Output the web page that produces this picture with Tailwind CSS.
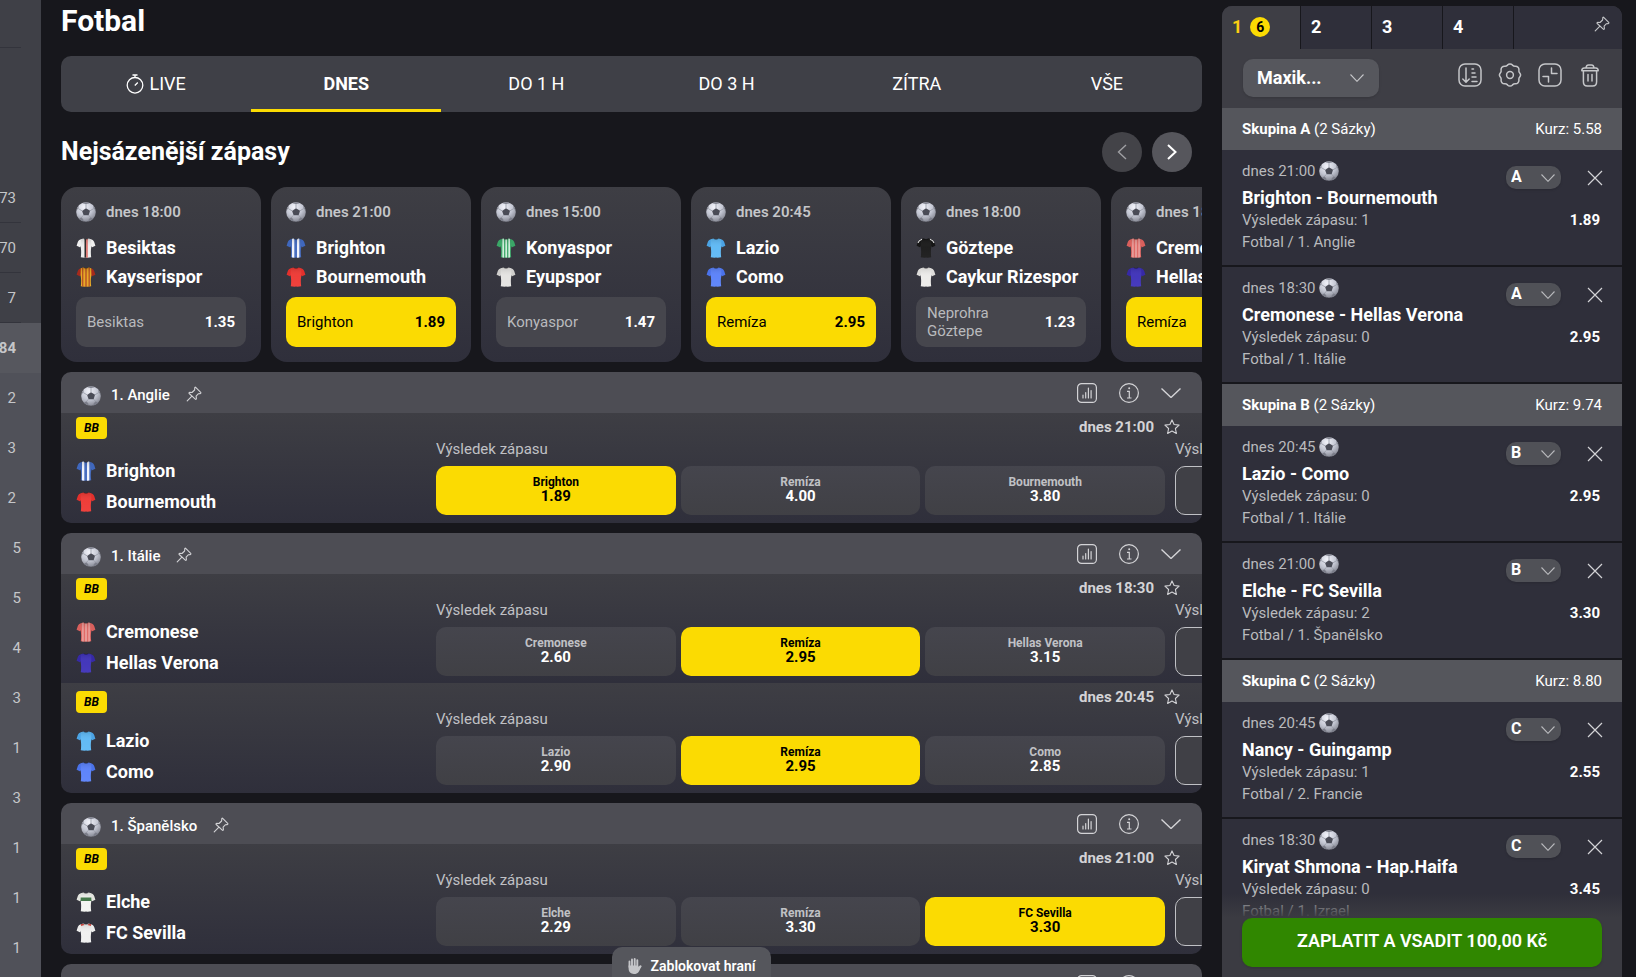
<!DOCTYPE html>
<html lang="cs">
<head>
<meta charset="utf-8">
<meta name="viewport" content="width=device-width, initial-scale=1">
<title>Fotbal</title>
<script src="https://cdn.jsdelivr.net/npm/@tailwindcss/browser@4"></script>
</head>
<body class="bg-[#17171c] text-white font-[Roboto,sans-serif] h-screen overflow-hidden text-[15px]">

<svg class="absolute size-0" aria-hidden="true">
  <defs>
    <radialGradient id="ballShade" cx="0.4" cy="0.25" r="0.8">
      <stop offset="0" stop-color="#f2f3fa"/><stop offset="0.55" stop-color="#c3c6d2"/><stop offset="1" stop-color="#80828d"/>
    </radialGradient>
    <linearGradient id="fold" x1="0" y1="0" x2="0" y2="1">
      <stop offset="0" stop-color="#000" stop-opacity="0.14"/><stop offset="0.45" stop-color="#fff" stop-opacity="0.04"/><stop offset="1" stop-color="#fff" stop-opacity="0.06"/>
    </linearGradient>
    <clipPath id="torso"><path d="M4.8 1.300 7.500.4c1.400 1 3.600 1 5 0l2.700.9.200 7.300c-.8 3.600-.6 7.500-.2 10.600l-3.700.6-1.500-.4-1.500.4-3.700-.6c.4-3.100.6-7-.2-10.600z"/></clipPath>
  </defs>
  <symbol id="ball" viewBox="0 0 20 20">
    <circle cx="10" cy="10" r="9.800" fill="url(#ballShade)"/>
    <path d="M10 6.200 14 8.800 12.600 13.200H7.600L6.100 8.900z" fill="#4a4c57"/>
    <path d="M6.300 1.200 10 2.100 13.800 1.200 12.500.6 10 .3 7.500.6zM.5 8.500 2.200 6.500 3 3.600 1.300 6zM19.500 8.500 17.800 6.500 17 3.600 18.700 6zM3 16.700 5.400 15.300 7.300 17.600 7.600 19.400 5 18.400zM17 16.700 14.600 15.300 12.700 17.600 12.400 19.400 15 18.400z" fill="#7c7e8a"/>
    <path d="M10 2.100v4.100M14 8.800l3.800-2.300M12.600 13.200l2 2.100M7.600 13.200l-2.200 2.100M6.100 8.900 2.200 6.500" stroke="#9699a5" stroke-width=".8" fill="none"/>
  </symbol>
  <symbol id="pin" viewBox="0 0 16 16">
    <path d="m9.700 1.300 5 5c.5.500.2 1.300-.5 1.300l-1.700.1-2.400 2.400.3 2.300c.1.800-.6 1.200-1.100.7L3.200 7.500c-.5-.5-.1-1.200.6-1.200l2.200.2 2.600-2.500.2-2.100c0-.7.5-1 .9-.6zM5.700 10.300 1.200 14.800" fill="none" stroke="currentColor" stroke-width="1.100" stroke-linecap="round" stroke-linejoin="round"/>
  </symbol>
  <symbol id="chart" viewBox="0 0 20 20">
    <rect x=".6" y=".6" width="18.800" height="18.800" rx="4" fill="none" stroke="currentColor" stroke-width="1.200"/>
    <path d="M6 15v-3M8.700 15V9.500M11.400 15V5M14.100 15V7.500" stroke="currentColor" stroke-width="1.200" stroke-linecap="round"/>
  </symbol>
  <symbol id="info" viewBox="0 0 20 20">
    <circle cx="10" cy="10" r="9.400" fill="none" stroke="currentColor" stroke-width="1.200"/>
    <path d="M8 8.300h2.300V15M8 15h4.500" fill="none" stroke="currentColor" stroke-width="1.200"/><circle cx="10.200" cy="5.300" r="1" fill="currentColor"/>
  </symbol>
  <symbol id="chevron" viewBox="0 0 20 10"><path d="M.5.5 10 9.500 19.500.5" fill="none" stroke="currentColor" stroke-width="1.400"/></symbol>
  <symbol id="chevronSmall" viewBox="0 0 14 8"><path d="M.5.5 7 7.300 13.500.5" fill="none" stroke="currentColor" stroke-width="1.100"/></symbol>
  <symbol id="star" viewBox="0 0 16 16"><path d="M8 .9 10.100 5.500l5 .6-3.700 3.400 1 5L8 12l-4.400 2.500 1-5L.9 6.100l5-.6z" fill="none" stroke="currentColor" stroke-width="1.100" stroke-linejoin="round"/></symbol>
  <symbol id="cross" viewBox="0 0 16 16"><path d="M1 1l14 14M15 1 1 15" stroke="currentColor" stroke-width="1.200"/></symbol>
</svg>

<div class="flex h-full">
  <nav aria-label="Sporty" class="w-[41px] shrink-0 bg-[#3f4047] text-[#c5c6c9] overflow-hidden">
    <div class="h-12 mr-5 border-b border-[#33343c]"></div>
    <div class="h-[125px]"></div>
    <div id="counts"></div>
  </nav>

  <main class="relative flex-1 min-w-0 mx-5 overflow-hidden">
    <h1 class="text-3xl leading-[42px] h-14 font-bold">Fotbal</h1>
    <div id="tabs" class="grid grid-cols-6 h-14 rounded-[10px] bg-[#3f4047] overflow-hidden text-lg"></div>

    <div class="flex items-center h-[75px] pt-1">
      <h2 class="text-[25px] font-bold flex-1">Nejsázenější zápasy</h2>
      <div class="flex gap-[10px] mr-[10px]">
        <button aria-label="Předchozí" class="size-10 rounded-full bg-[#434348] text-[#a0a0a4] grid place-items-center"><svg class="w-[10px] h-4" viewBox="0 0 10 16"><path d="M9 1 1.500 8 9 15" fill="none" stroke="currentColor" stroke-width="1.400"/></svg></button>
        <button aria-label="Další" class="size-10 rounded-full bg-[#56565c] grid place-items-center"><svg class="w-[10px] h-4" viewBox="0 0 10 16"><path d="M1 1 8.500 8 1 15" fill="none" stroke="currentColor" stroke-width="2"/></svg></button>
      </div>
    </div>

    <div id="cards" class="flex gap-[10px] overflow-hidden"></div>
    <div id="leagues"></div>
  </main>

  <aside class="relative w-[400px] shrink-0 mr-[14px] mt-[6px] rounded-t-[10px] overflow-hidden bg-[#3e3e45]">
    <div class="flex h-[43px] bg-[#2f2f3a] text-lg font-bold">
      <button class="w-[78px] flex items-center gap-2 pl-[10px] pb-[2px] bg-[#3e3e45] text-[#fbce12]">1 <span class="size-5 rounded-full bg-[#fbdb02] text-black text-sm leading-5 text-center">6</span></button>
      <button class="w-[71px] pl-[10px] pb-[2px] text-left border-l border-[#17171c]">2</button>
      <button class="w-[71px] pl-[10px] pb-[2px] text-left border-l border-[#17171c]">3</button>
      <button class="w-[71px] pl-[10px] pb-[2px] text-left border-l border-[#17171c]">4</button>
      <div class="flex-1 flex justify-end pr-3 pt-[10px] border-l border-[#17171c]">
        <button aria-label="Připnout" class="size-4 text-[#c5c6c9]"><svg class="size-4"><use href="#pin"/></svg></button>
      </div>
    </div>

    <div class="flex items-start justify-between h-[59px] pt-[10px] pl-[21px] pr-5">
      <label class="relative block">
        <select aria-label="Typ tiketu" class="appearance-none w-[136px] h-[38px] pl-[14px] rounded-[10px] bg-[#56575d] text-lg font-bold shadow-sm"><option>Maxik...</option></select>
        <svg class="absolute right-[15px] top-[15px] w-[14px] h-2 text-[#c5c6c9] pointer-events-none"><use href="#chevronSmall"/></svg>
      </label>
      <div class="flex gap-4 pt-1 text-[#c5c6c9]">
        <button aria-label="Seřadit"><svg class="size-6" viewBox="0 0 24 24" fill="none" stroke="currentColor" stroke-width="1.500" stroke-linecap="round" stroke-linejoin="round"><rect x="1" y="1" width="22" height="22" rx="6"/><path d="M8 5v14M4.800 16 8 19.200 11.200 16M14 6h1.500M14 10h3M14 14h4M14 18.500h5"/></svg></button>
        <button aria-label="Nastavení"><svg class="size-6" viewBox="0 0 24 24" fill="none" stroke="currentColor" stroke-width="1.500" stroke-linejoin="round"><path d="M9.500 2.100c1.400-1.500 3.600-1.500 5 0 .8.800 1.700 1.200 2.800 1.100 2.200-.1 3.900 1.800 3.600 4-.2 1.100.1 2 .8 2.800 1.300 1.500 1.300 2.500 0 4-.7.800-1 1.700-.8 2.800.3 2.200-1.400 4.100-3.600 4-1.100-.1-2 .3-2.800 1.100-1.400 1.500-3.600 1.500-5 0-.8-.8-1.700-1.200-2.800-1.100-2.200.1-3.900-1.800-3.600-4 .2-1.100-.1-2-.8-2.800-1.300-1.500-1.300-2.500 0-4 .7-.8 1-1.700.8-2.800-.3-2.200 1.400-4.100 3.600-4 1.100.1 2-.3 2.800-1.100z"/><circle cx="12" cy="12" r="3.400"/></svg></button>
        <button aria-label="Zmenšit"><svg class="size-6" viewBox="0 0 24 24" fill="none" stroke="currentColor" stroke-width="1.500" stroke-linecap="round" stroke-linejoin="round"><rect x="1" y="1" width="22" height="22" rx="6"/><path d="M13.500 5v5.500H19M5 13.500h5.500V19"/></svg></button>
        <button aria-label="Smazat"><svg class="size-6" viewBox="0 0 24 24" fill="none" stroke="currentColor" stroke-width="1.500" stroke-linecap="round" stroke-linejoin="round"><path d="M3.800 7.700c0-2 1-2.800 2.400-2.800h11.600c1.400 0 2.400.8 2.400 2.800zM8 4.700C8.300 2.700 9 2 10.500 2h3c1.500 0 2.200.7 2.500 2.700M5.400 7.900v10.800c0 2.900 1.300 4.300 3.900 4.300h5.400c2.600 0 3.900-1.400 3.900-4.300V7.900M10 11.500v6.500M14 11.500v6.500"/></svg></button>
      </div>
    </div>

    <div id="slip"></div>

    <div class="absolute inset-x-0 bottom-0">
      <div class="h-6 bg-linear-to-b from-[#3b3b42]/0 to-[#3b3b42]"></div>
      <div class="bg-[#3b3b42] px-5 pb-[10px]">
        <button class="w-full h-[49px] pb-[3px] rounded-[10px] bg-[#308700] text-lg font-semibold shadow">ZAPLATIT A VSADIT 100,00 Kč</button>
      </div>
    </div>
  </aside>
</div>

<button class="fixed bottom-0 left-[612px] w-[159px] h-[30px] pt-2 rounded-t-[10px] bg-[#55565c] flex justify-center items-center gap-[9px] text-sm font-semibold">
  <svg class="w-[14px] h-4 text-[#c5c6c9]" viewBox="0 0 14 16" fill="none" stroke="currentColor" stroke-width="1.900" stroke-linecap="round"><path d="M1.500 9V3.500M4 8V1.500M6.700 8V1M9.300 9V2.200M9.500 11.500l3-3.300"/><path d="M.6 7.500H10l.8 2L13 7.800c.6.500.4 1.200 0 1.800-1.300 2-2 6-5.500 6.400C3.500 16.300.6 14.500.6 10.500z" fill="currentColor" stroke="none"/></svg>
  Zablokovat hraní
</button>

<script>
const ball = '<svg class="size-5 shrink-0"><use href="#ball"/></svg>';

// Jersey: body colour, sleeve colour, and stripes as [x, width, colour] or bands as markup
function jersey(body, sleeve, stripes = [], extra = '') {
  return `<svg class="size-5 shrink-0" viewBox="0 0 20 20">
    <path d="M6 .9C3.800 1.500 2.300 2.200 1.800 4L.6 7.800l3.300 1.500 1.700-2zM14 .9c2.200.6 3.700 1.300 4.200 3.100l1.200 3.800-3.300 1.500-1.700-2z" fill="${sleeve}"/>
    <g clip-path="url(#torso)"><rect width="20" height="20" fill="${body}"/>${stripes.map(([x, w, c]) => `<rect x="${x}" width="${w}" height="20" fill="${c}"/>`).join('')}${extra}<rect width="20" height="20" fill="url(#fold)"/></g>
    <path d="M7.600.5c1.400 1.300 3.400 1.300 4.800 0" fill="none" stroke="#0005" stroke-width=".8"/></svg>`;
}
const kit = {
  'Besiktas': jersey('#ececec', '#f0f0f0', [[8.5, 1.5, '#222'], [10.3, 1.3, '#d9443c']]),
  'Kayserispor': jersey('#e8a51c', '#a52a1c', [[6.2, 1.1, '#a8391c'], [9.4, 1.2, '#a8391c'], [12.6, 1.1, '#a8391c']]),
  'Brighton': jersey('#3f67bd', '#3f67bd', [[6, 2.3, '#f1f3fb'], [11, 2.3, '#f1f3fb']]),
  'Bournemouth': jersey('#ee3631', '#e2302c'),
  'Konyaspor': jersey('#3aa767', '#3aa767', [[6.5, 1.3, '#f4fff8'], [9.5, 1.3, '#f4fff8'], [12.5, 1.3, '#f4fff8']]),
  'Eyupspor': jersey('#e4e3e1', '#cfcecc'),
  'Lazio': jersey('#5cb8f5', '#4ba3e4'),
  'Como': jersey('#5880fa', '#4a72ea'),
  'Göztepe': jersey('#161616', '#161616').replace('</svg>', '<path d="M6 1.200C3.800 2 2.600 2.800 2 4.800M14 1.200c2.200.8 3.400 1.600 4 3.600" fill="none" stroke="#e8e8e8" stroke-width="1.100"/></svg>'),
  'Caykur Rizespor': jersey('#ecebe9', '#dddcda'),
  'Cremonese': jersey('#df6460', '#d95f5c', [[6.5, .9, '#f0c4c2'], [9.5, 1, '#f0c4c2'], [12.6, .9, '#f0c4c2']]),
  'Hellas Verona': jersey('#3c2fb8', '#3629a6'),
  'Elche': jersey('#f3f4f0', '#e2e4de', [], '<rect y="5.500" width="20" height="3.500" fill="#3d7443"/>'),
  'FC Sevilla': jersey('#efefef', '#ececec', [], '<path d="M4 .5h3l1.500 1.500L5 3zM16 .5h-3L11.500 2 15 3z" fill="#d9443c"/>'),
};

document.getElementById('counts').innerHTML =
  [73, 70, 7].map(n => `<a href="#" class="flex flex-col items-end h-[50px] pr-[25px] text-right leading-[50px] relative after:absolute after:bottom-0 after:left-0 after:right-5 after:h-px after:bg-[#33343c] last:after:hidden">${n}</a>`).join('') +
  `<div class="bg-[#505159]">` +
  `<a href="#" class="flex justify-end h-[50px] pr-[25px] leading-[50px] font-bold bg-[#56575e]">84</a>` +
  [2, 3, 2].map(n => `<a href="#" class="flex justify-end h-[50px] pr-[25px] leading-[50px]">${n}</a>`).join('') +
  [5, 5, 4, 3, 1, 3, 1, 1, 1, ''].map(n => `<a href="#" class="flex justify-end h-[50px] pr-5 leading-[50px]">${n}</a>`).join('') + `</div>`;

const stopwatch = '<svg class="w-[18px] h-5 mr-[5px]" viewBox="0 0 17 20" fill="none" stroke="currentColor" stroke-width="1.300"><circle cx="8.500" cy="11.300" r="7.800"/><path d="M6 1h5M8.500 1v2.500M8.300 11.500l3-3"/></svg>';
document.getElementById('tabs').innerHTML = ['LIVE', 'DNES', 'DO 1 H', 'DO 3 H', 'ZÍTRA', 'VŠE'].map((t, i) =>
  `<button class="flex items-center justify-center border-y-[3px] border-t-transparent ${i === 1 ? 'font-bold border-b-[#fbdb02]' : 'border-b-transparent'}">${i ? '' : stopwatch}${t}</button>`).join('');

const cards = [
  ['18:00', 'Besiktas', 'Kayserispor', 'Besiktas', '1.35', 0],
  ['21:00', 'Brighton', 'Bournemouth', 'Brighton', '1.89', 1],
  ['15:00', 'Konyaspor', 'Eyupspor', 'Konyaspor', '1.47', 0],
  ['20:45', 'Lazio', 'Como', 'Remíza', '2.95', 1],
  ['18:00', 'Göztepe', 'Caykur Rizespor', 'Neprohra Göztepe', '1.23', 0],
  ['18:30', 'Cremonese', 'Hellas Verona', 'Remíza', '2.95', 1],
];
document.getElementById('cards').innerHTML = cards.map(([time, home, away, tip, odd, on]) => `
  <article class="w-[200px] h-[175px] shrink-0 rounded-2xl p-[15px] bg-linear-to-b from-[#3e3e44] to-[#2f2f3b]">
    <div class="flex items-center gap-[10px] h-5 mb-[11px] font-semibold text-[#c5c6c9]">${ball}${`dnes ${time}`}</div>
    <div class="flex items-center gap-[10px] h-[29px] text-lg font-bold whitespace-nowrap">${kit[home]}${home}</div>
    <div class="flex items-center gap-[10px] h-[29px] text-lg font-bold whitespace-nowrap">${kit[away]}${away}</div>
    <button class="mt-[6px] w-full h-[50px] px-[11px] rounded-[10px] flex items-center justify-between text-left leading-[18px] ${on ? 'bg-[#fbdb02] text-black' : 'bg-[#46464d] text-[#b9babd]'}">
      <span class="w-[90px]">${tip}</span><b class="${on ? 'text-black' : 'text-white'}">${odd}</b>
    </button>
  </article>`).join('');

const leagues = [
  ['1. Anglie', [['21:00', 'Brighton', 'Bournemouth', ['1.89', '4.00', '3.80'], 0]]],
  ['1. Itálie', [['18:30', 'Cremonese', 'Hellas Verona', ['2.60', '2.95', '3.15'], 1], ['20:45', 'Lazio', 'Como', ['2.90', '2.95', '2.85'], 1]]],
  ['1. Španělsko', [['21:00', 'Elche', 'FC Sevilla', ['2.29', '3.30', '3.30'], 2]]],
  ['', []],
];
const odds = (home, away, values, picked) => [home, 'Remíza', away].map((name, i) => `
  <button class="flex-1 h-[49px] pb-[3px] rounded-[10px] flex flex-col items-center justify-center ${i === picked ? 'bg-[#fbdb02] text-black' : 'bg-linear-to-b from-[#45454d] to-[#404045]'}">
    <span class="text-xs leading-[14px] font-bold ${i === picked ? '' : 'text-[#c0c1c5]'}">${name}</span>
    <span class="text-[15px] leading-[14px] font-bold">${values[i]}</span>
  </button>`).join('');
const match = ([time, home, away, values, picked], i) => `
  <div class="h-[109px] last:h-[110px] overflow-hidden pl-[15px] bg-linear-to-b from-[#3e3e44] to-[#2f2f3b]">
    <div class="flex items-start justify-between h-[27px] ${i ? 'pt-2' : 'pt-1'}">
      <span class="w-[31px] h-[22px] rounded bg-[#fbdb02] text-black text-xs leading-[23px] text-center font-bold italic">BB</span>
      <div class="flex items-center gap-[10px] h-5 pr-[22px] font-bold text-[#d3d3d6] ${i ? '-mt-1' : ''}">dnes ${time}
        <button aria-label="Přidat do oblíbených" class="size-4"><svg class="size-4"><use href="#star"/></svg></button>
      </div>
    </div>
    <div class="flex">
      <div class="w-[360px] shrink-0 pt-[15px] text-lg font-bold">
        <div class="flex items-center gap-[10px] h-[31px]">${kit[home]}${home}</div>
        <div class="flex items-center gap-[10px] h-[31px]">${kit[away]}${away}</div>
      </div>
      <div class="flex-1 min-w-0 flex gap-[10px] overflow-hidden text-[#c0c1c5]">
        <div class="w-[calc(100%-37px)] shrink-0">
          <div class="h-[26px] leading-[19px]">Výsledek zápasu</div>
          <div class="flex gap-[5px] text-white">${odds(home, away, values, picked)}</div>
        </div>
        <div class="w-[240px] shrink-0">
          <div class="h-[26px] leading-[19px]">Výsledek zápasu</div>
          <button aria-label="Další sázky" class="w-full h-[49px] rounded-[10px] border border-[#c0c1c5] bg-[#404046]"></button>
        </div>
      </div>
    </div>
  </div>`;
document.getElementById('leagues').innerHTML = leagues.map(([name, matches]) => `
  <section class="mt-[10px] rounded-[10px] overflow-hidden">
    <header class="flex items-center h-[41px] pl-5 pr-[21px] bg-[#4d4d54] text-[#d3d3d6]">
      <div class="flex items-center gap-[10px] pt-[6px]">${ball}<h3 class="text-white font-medium">${name}</h3></div>
      <button aria-label="Připnout" class="ml-4 size-4 mt-[2px]"><svg class="size-4"><use href="#pin"/></svg></button>
      <div class="flex-1"></div>
      <div class="flex items-center gap-[22px]">
        <button aria-label="Statistiky"><svg class="size-5"><use href="#chart"/></svg></button>
        <button aria-label="Informace"><svg class="size-5"><use href="#info"/></svg></button>
        <button aria-label="Sbalit"><svg class="w-5 h-[10px]"><use href="#chevron"/></svg></button>
      </div>
    </header>
    ${matches.map(match).join('')}
  </section>`).join('');

const slip = [
  ['A', '5.58', [['21:00', 'Brighton - Bournemouth', '1', '1. Anglie', '1.89'], ['18:30', 'Cremonese - Hellas Verona', '0', '1. Itálie', '2.95']]],
  ['B', '9.74', [['20:45', 'Lazio - Como', '0', '1. Itálie', '2.95'], ['21:00', 'Elche - FC Sevilla', '2', '1. Španělsko', '3.30']]],
  ['C', '8.80', [['20:45', 'Nancy - Guingamp', '1', '2. Francie', '2.55'], ['18:30', 'Kiryat Shmona - Hap.Haifa', '0', '1. Izrael', '3.45']]],
];
document.getElementById('slip').innerHTML = slip.map(([g, rate, bets]) => `
  <section>
    <header class="flex items-center justify-between h-[42px] px-5 bg-[#55565c]"><span><b>Skupina ${g}</b> (2 Sázky)</span><span>Kurz: ${rate}</span></header>
    ${bets.map(([time, teams, pick, league, odd]) => `
    <article class="flex justify-between h-[117px] pl-5 bg-[#2f2f3a] border-b-2 border-[#17171c] pt-[10px] leading-[22px] text-[#b9babd]">
      <div>
        <div class="flex items-center gap-[3px] mb-[5px]">dnes ${time} ${ball}</div>
        <h4 class="text-lg leading-[22px] font-bold text-white">${teams}</h4>
        <p>Výsledek zápasu: ${pick}</p>
        <p>Fotbal / ${league}</p>
      </div>
      <div class="flex flex-col items-end pr-[19px] pt-[6px]">
        <div class="flex items-center gap-[26px]">
          <label class="relative block">
            <select aria-label="Skupina" class="block appearance-none w-[55px] h-[23px] pl-[5px] pb-px rounded-[10px] bg-[#505157] text-base leading-5 font-bold text-white shadow"><option>${g}</option></select>
            <svg class="absolute right-[6px] top-2 w-[14px] h-2 pointer-events-none"><use href="#chevronSmall"/></svg>
          </label>
          <button aria-label="Odebrat" class="size-4 text-[#d3d3d6]"><svg class="size-4"><use href="#cross"/></svg></button>
        </div>
        <b class="mt-5 mr-[3px] leading-[22px] text-white">${odd}</b>
      </div>
    </article>`).join('')}
  </section>`).join('');
</script>
</body>
</html>
